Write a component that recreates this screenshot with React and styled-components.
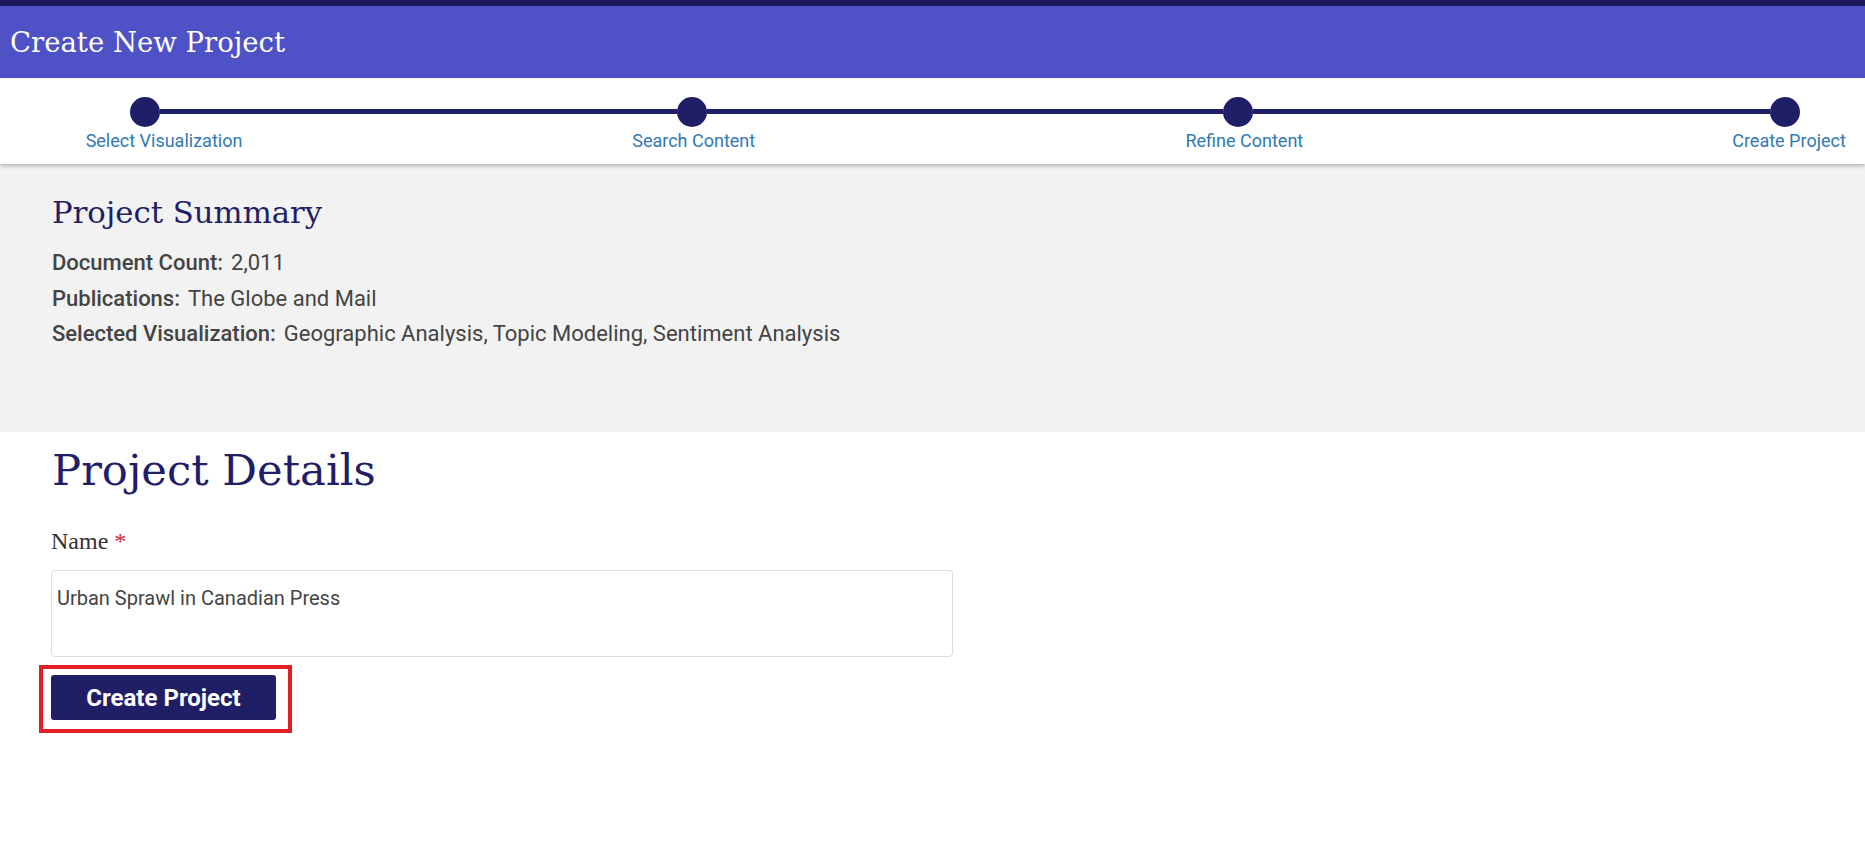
import React, { useState } from 'react';
import styled, { createGlobalStyle } from 'styled-components';

const GlobalStyle = createGlobalStyle`
  * {
    box-sizing: border-box;
  }
  body {
    margin: 0;
    background: #fff;
    font-family: Roboto, "Liberation Sans", sans-serif;
  }
`;

const navy = '#1f1e67';

const Page = styled.div`
  display: flex;
  flex-direction: column;
  min-height: 100vh;
  background: #fff;
`;

const Header = styled.header`
  display: flex;
  align-items: center;
  height: 78px;
  padding-left: 10px;
  background: #4f51c6;
  border-top: 6px solid #1b1959;
`;

const HeaderTitle = styled.h1`
  margin: 0;
  font-family: "DejaVu Serif", serif;
  font-size: 27.5px;
  font-weight: 400;
  color: #fff;
`;

const StepperBar = styled.nav`
  position: relative;
  z-index: 1;
  display: flex;
  align-items: flex-start;
  padding: 19px 65px 13px 130px;
  background: #fff;
  box-shadow: 0 2px 4px rgba(0, 0, 0, 0.25);
`;

const Step = styled.div`
  display: flex;
  flex-direction: column;
  align-items: center;
  width: 30px;
  flex-shrink: 0;
`;

const Dot = styled.span`
  width: 30px;
  height: 30px;
  border-radius: 50%;
  background: ${navy};
`;

const StepLabel = styled.span`
  margin-top: 4px;
  white-space: nowrap;
  font-size: 18px;
  line-height: 20px;
  color: #3179b5;
  transform: translateX(${(p) => p.$shift || 0}px);
`;

const Connector = styled.span`
  flex: 1;
  height: 5px;
  margin-top: 12px;
  background: ${navy};
`;

const Summary = styled.section`
  padding: 32px 52px 0;
  height: 268px;
  background: #f2f2f2;
`;

const SummaryTitle = styled.h2`
  margin: 0 0 16px;
  font-family: "DejaVu Serif", serif;
  font-size: 30.7px;
  line-height: 33px;
  font-weight: 400;
  color: ${navy};
`;

const SummaryRow = styled.div`
  font-size: 22px;
  line-height: 35.5px;
  color: #444;
`;

const RowLabel = styled.span`
  margin-right: 8px;
  font-weight: 500;
`;

const Details = styled.section`
  display: flex;
  flex-direction: column;
  align-items: flex-start;
  padding: 13px 51px 40px;
`;

const DetailsTitle = styled.h2`
  margin: 0 0 33px 1px;
  font-family: "DejaVu Serif", serif;
  font-size: 43.3px;
  line-height: 50px;
  font-weight: 400;
  color: ${navy};
`;

const FieldLabel = styled.label`
  font-family: "Liberation Serif", serif;
  font-size: 24px;
  line-height: 26px;
  color: #333;
`;

const Required = styled.span`
  color: #c62b2b;
`;

const NameInput = styled.textarea`
  width: 902px;
  height: 87px;
  margin-top: 16px;
  padding: 15px 5px;
  border: 1px solid #dcdcdc;
  border-radius: 4px;
  resize: none;
  outline: none;
  font-family: Roboto, "Liberation Sans", sans-serif;
  font-size: 20px;
  line-height: 24px;
  color: #444;
`;

const Highlight = styled.div`
  margin: 8px 0 0 -12px;
  padding: 6px 12px 9px 8px;
  border: 4px solid #e31e26;
`;

const CreateButton = styled.button`
  display: block;
  width: 225px;
  height: 45px;
  border: none;
  border-radius: 3px;
  background: ${navy};
  color: #fff;
  font-family: Roboto, "Liberation Sans", sans-serif;
  font-size: 24px;
  font-weight: 700;
  cursor: pointer;
`;

const steps = [
  { label: 'Select Visualization', shift: 19 },
  { label: 'Search Content', shift: 2 },
  { label: 'Refine Content', shift: 6 },
  { label: 'Create Project', shift: 4 },
];

const summary = [
  { label: 'Document Count:', value: '2,011' },
  { label: 'Publications:', value: 'The Globe and Mail' },
  { label: 'Selected Visualization:', value: 'Geographic Analysis, Topic Modeling, Sentiment Analysis' },
];

export default function App() {
  const [name, setName] = useState('Urban Sprawl in Canadian Press');

  return (
    <>
      <GlobalStyle />
      <Page>
        <Header>
          <HeaderTitle>Create New Project</HeaderTitle>
        </Header>

        <StepperBar>
          {steps.map((step, i) => (
            <React.Fragment key={step.label}>
              {i > 0 && <Connector />}
              <Step>
                <Dot />
                <StepLabel $shift={step.shift}>{step.label}</StepLabel>
              </Step>
            </React.Fragment>
          ))}
        </StepperBar>

        <Summary>
          <SummaryTitle>Project Summary</SummaryTitle>
          {summary.map((row) => (
            <SummaryRow key={row.label}>
              <RowLabel>{row.label}</RowLabel>
              {row.value}
            </SummaryRow>
          ))}
        </Summary>

        <Details>
          <DetailsTitle>Project Details</DetailsTitle>
          <FieldLabel htmlFor="project-name">
            Name <Required>*</Required>
          </FieldLabel>
          <NameInput id="project-name" value={name} onChange={(e) => setName(e.target.value)} />
          <Highlight>
            <CreateButton>Create Project</CreateButton>
          </Highlight>
        </Details>
      </Page>
    </>
  );
}
